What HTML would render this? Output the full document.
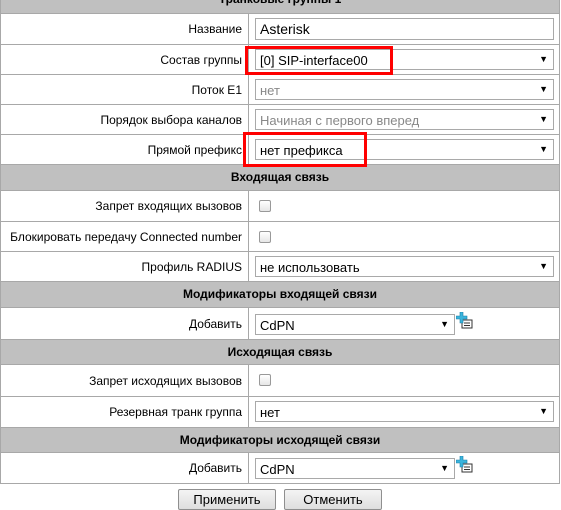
<!DOCTYPE html>
<html><head><meta charset="utf-8"><style>
*{box-sizing:border-box;margin:0;padding:0}
body{width:561px;height:510px;background:#fff;font-family:"Liberation Sans",Arial,sans-serif;font-size:12px;color:#000;position:relative;overflow:hidden}
.r{position:absolute;left:0;width:560px;border:1px solid #a8a8a8;border-top:none}
.h{background:#c0c0c0;text-align:center;font-weight:bold;line-height:25px}
.l{position:absolute;left:0;width:248px;top:0;bottom:0;text-align:right;padding-right:6px;border-right:1px solid #a8a8a8;display:flex;align-items:center;justify-content:flex-end}
.s{position:absolute;left:254px;top:4px;height:21px;border:1px solid #a9a9a9;background:#fff;padding-left:4px;line-height:21px;font-size:13px}
.s.dis{color:#888}
.s .ar{position:absolute;right:5px;top:0;font-size:9px;line-height:19px}
.cb{position:absolute;left:258px;top:9px;width:12px;height:12px;border:1px solid #999;border-radius:2px;background:linear-gradient(#fff,#e6e6e6)}
.red{position:absolute;border:3px solid #f00}
.btn{position:absolute;top:489px;height:21px;border:1px solid #8f8f8f;background:linear-gradient(#f4f4f4,#dedede);text-align:center;line-height:19px;font-size:13px;border-radius:2px}
</style></head><body>
<div class="r h" style="top:-13px;height:27px;border-top:1px solid #a8a8a8;line-height:23px">Транковые группы 1</div>
<div class="r" style="top:14px;height:31px"><div class="l">Название</div><div class="s" style="width:299px;top:4px;height:22px;line-height:21px;font-size:14px">Asterisk</div></div>
<div class="r" style="top:45px;height:30px"><div class="l">Состав группы</div><div class="s" style="width:299px">[0] SIP-interface00<span class="ar">▼</span></div></div>
<div class="r" style="top:75px;height:30px"><div class="l">Поток E1</div><div class="s dis" style="width:299px">нет<span class="ar" style="color:#000">▼</span></div></div>
<div class="r" style="top:105px;height:30px"><div class="l">Порядок выбора каналов</div><div class="s dis" style="width:299px">Начиная с первого вперед<span class="ar" style="color:#000">▼</span></div></div>
<div class="r" style="top:135px;height:30px"><div class="l">Прямой префикс</div><div class="s" style="width:299px">нет префикса<span class="ar">▼</span></div></div>
<div class="r h" style="top:165px;height:26px">Входящая связь</div>
<div class="r" style="top:191px;height:31px"><div class="l">Запрет входящих вызовов</div><div class="cb"></div></div>
<div class="r" style="top:222px;height:30px"><div class="l">Блокировать передачу Connected number</div><div class="cb"></div></div>
<div class="r" style="top:252px;height:30px"><div class="l">Профиль RADIUS</div><div class="s" style="width:299px">не использовать<span class="ar">▼</span></div></div>
<div class="r h" style="top:282px;height:26px">Модификаторы входящей связи</div>
<div class="r" style="top:308px;height:32px"><div class="l">Добавить</div><div class="s" style="width:200px;top:6px">CdPN<span class="ar">▼</span></div>
<svg style="position:absolute;left:455px;top:4px" width="17" height="17" viewBox="0 0 17 17"><rect x="6" y="8" width="10" height="8" fill="#fff" stroke="#333"/><line x1="8" y1="11" x2="14" y2="11" stroke="#333"/><line x1="8" y1="13.5" x2="14" y2="13.5" stroke="#333"/><path d="M4 0h3v4h4v3h-4v4h-3v-4h-4v-3h4z" fill="#3ab4dc" stroke="#1a7fa8" stroke-width=".6"/></svg></div>
<div class="r h" style="top:340px;height:25px">Исходящая связь</div>
<div class="r" style="top:365px;height:32px"><div class="l">Запрет исходящих вызовов</div><div class="cb"></div></div>
<div class="r" style="top:397px;height:31px"><div class="l">Резервная транк группа</div><div class="s" style="width:299px">нет<span class="ar">▼</span></div></div>
<div class="r h" style="top:428px;height:25px">Модификаторы исходящей связи</div>
<div class="r" style="top:453px;height:31px"><div class="l">Добавить</div><div class="s" style="width:200px;top:5px">CdPN<span class="ar">▼</span></div>
<svg style="position:absolute;left:455px;top:3px" width="17" height="17" viewBox="0 0 17 17"><rect x="6" y="8" width="10" height="8" fill="#fff" stroke="#333"/><line x1="8" y1="11" x2="14" y2="11" stroke="#333"/><line x1="8" y1="13.5" x2="14" y2="13.5" stroke="#333"/><path d="M4 0h3v4h4v3h-4v4h-3v-4h-4v-3h4z" fill="#3ab4dc" stroke="#1a7fa8" stroke-width=".6"/></svg></div>
<div class="red" style="left:245px;top:46px;width:148px;height:29px"></div>
<div class="red" style="left:243px;top:132px;width:124px;height:35px"></div>
<div class="btn" style="left:178px;width:98px">Применить</div>
<div class="btn" style="left:284px;width:98px">Отменить</div>
</body></html>
